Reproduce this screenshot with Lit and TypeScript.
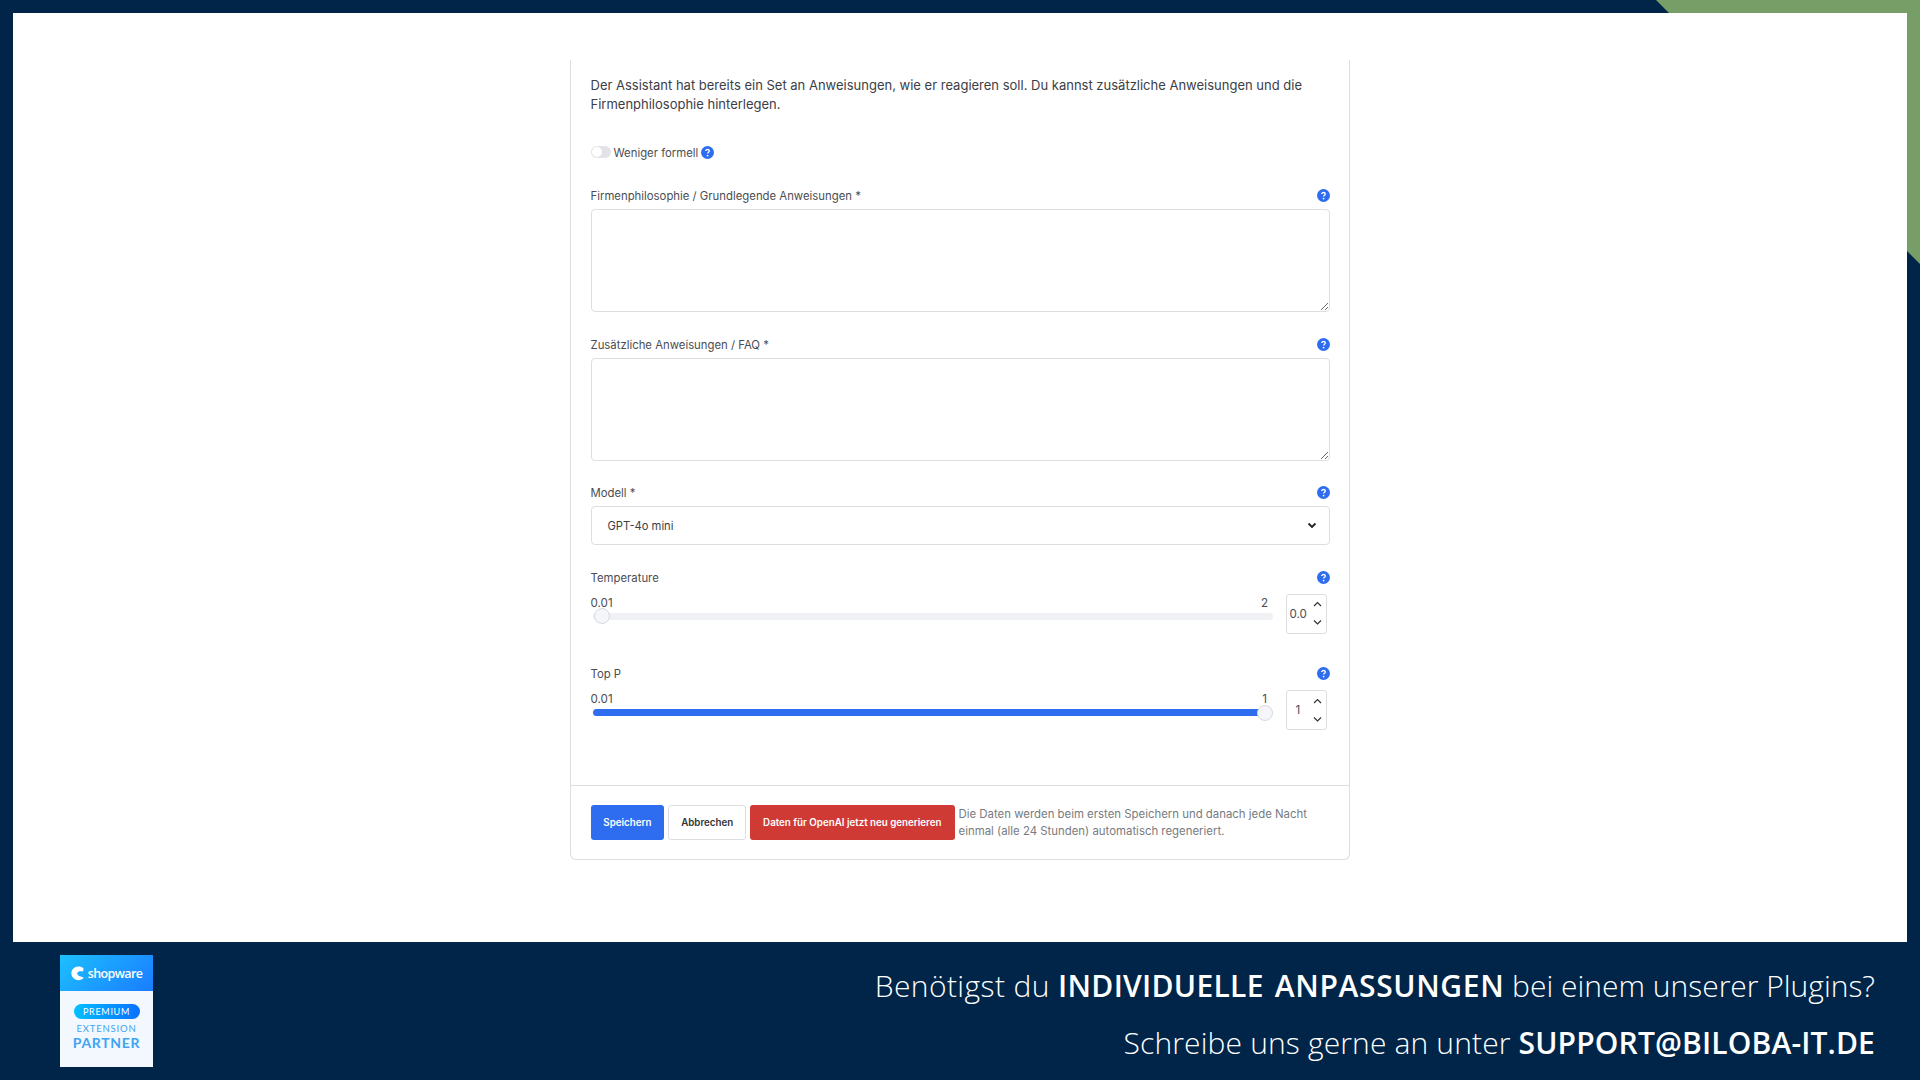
import { LitElement, html, css, svg } from "lit";
import { customElement } from "lit/decorators.js";

const help = html`<svg class="help" viewBox="0 0 13 13" width="13" height="13"><circle cx="6.5" cy="6.5" r="6.5" fill="#2f6df0"/><path d="M4.7 5.1c0-1 .8-1.6 1.8-1.6s1.8.6 1.8 1.5c0 1.3-1.7 1.3-1.7 2.6" fill="none" stroke="#fff" stroke-width="1.3"/><circle cx="6.6" cy="9.6" r=".85" fill="#fff"/></svg>`;
const chev = (up: boolean) => svg`<path d="${up ? "M1 5 4.5 1.5 8 5" : "M1 1.5 4.5 5 8 1.5"}" fill="none" stroke="#333" stroke-width="1.2"/>`;

@customElement("app-root")
export class AppRoot extends LitElement {
  static styles = css`
    :host { display: block; }
    * { box-sizing: border-box; }
    .page { position: relative; width: 1920px; height: 1080px; overflow: hidden; background: #002548; padding: 13px 13px 0; display: flex; flex-direction: column; font-family: Inter, "Liberation Sans", sans-serif; }
    .corner { position: absolute; right: 0; top: 0; }
    .main { position: relative; height: 929px; background: #fff; display: flex; justify-content: center; align-items: flex-start; flex: none; }
    .card { width: 780px; margin-top: 47px; margin-left: -1px; border: 1px solid #dcdee2; border-top: none; border-radius: 0 0 6px 6px; }
    .body { padding: 16px 19px 0 20px; height: 725px; }
    .intro { margin: 0; font-size: 13px; line-height: 19.25px; color: #3c4046; }
    .toggle-row { display: flex; align-items: center; height: 14px; margin-top: 30.5px; font-size: 11.35px; color: #4a4d52; }
    .toggle { width: 20px; height: 12px; border-radius: 6px; background: #e2e3e9; position: relative; margin-right: 3px; }
    .toggle::after { content: ""; position: absolute; left: 1px; top: 1px; width: 10px; height: 10px; border-radius: 50%; background: #fff; }
    .toggle-row .help { margin-left: 3px; }
    .toggle-row span:nth-child(2) { padding-top: 1px; }
    .label { display: flex; justify-content: space-between; align-items: center; height: 16px; margin-bottom: 5px; font-size: 11.35px; color: #4a4d52; }
    .label span { padding-top: 1px; }
    .f1 { margin-top: 28.5px; }
    .f2 { margin-top: 25px; }
    .f3 { margin-top: 24px; }
    .f4 { margin-top: 24.5px; margin-bottom: 0; }
    .f5 { margin-top: 32px; margin-bottom: 0; }
    textarea { display: block; width: 739px; height: 103px; border: 1px solid #dcdee2; border-radius: 4px; background: #fff; margin: 0; padding: 8px; outline: none; }
    .select { width: 739px; height: 39px; border: 1px solid #dcdee2; border-radius: 4px; display: flex; align-items: center; justify-content: space-between; padding: 1px 12px 0 16px; font-size: 11.2px; color: #3c4046; }
    .slider-row { display: flex; align-items: flex-start; }
    .slider { width: 682px; padding-top: 9.5px; }
    .scale { display: flex; justify-content: space-between; font-size: 11.6px; line-height: 16px; color: #4a4d52; padding: 0 3px 0 0; height: 16px; }
    .scale span:last-child { min-width: 10px; text-align: center; }
    .track { position: relative; height: 7px; margin: 2px 0 0 2px; border-radius: 4px; background: #f0f1f5; }
    .fill { position: absolute; left: 0; top: 0; bottom: 0; border-radius: 4px 0 0 4px; background: #2f6df0; }
    .thumb { position: absolute; top: -4.5px; width: 16px; height: 16px; margin-left: -8px; border-radius: 50%; background: #f5f6fa; border: 1px solid #d8dae0; }
    .num { width: 41px; height: 40px; margin: 8.5px 0 0 13px; border: 1px solid #dcdee2; border-radius: 3px; display: flex; align-items: center; justify-content: space-between; padding: 0 4px 0 3px; font-size: 11.6px; color: #4a4d52; }
    .num.single { padding-left: 9px; }
    .spin { display: flex; flex-direction: column; gap: 11px; }
    .spin svg { display: block; }
    .foot { border-top: 1px solid #dcdee2; display: flex; align-items: center; padding: 19px 19px 19px 20px; gap: 4px; }
    .btn { height: 35px; border: 1px solid transparent; border-radius: 3px; font: 600 9.75px Inter, sans-serif; display: flex; align-items: center; justify-content: center; }
    .save { width: 74px; background: #2f6df0; color: #fff; }
    .cancel { width: 78px; background: #fff; border-color: #dcdee2; color: #333; }
    .regen { width: 205px; background: #cf3a35; color: #fff; }
    .note { font-size: 11.4px; line-height: 17px; color: #787b80; width: 372px; }
    .bottom { flex: 1; display: flex; align-items: flex-start; justify-content: space-between; margin: 0 -13px; padding: 13px 45px 0 60px; }
    .badge { width: 93px; height: 112px; background: #f2f8fe; display: flex; flex-direction: column; align-items: center; }
    .badge-top { width: 100%; height: 36px; background: linear-gradient(135deg, #1cc0ff, #1a7cff); display: flex; align-items: center; justify-content: center; gap: 2px; color: #fff; font-size: 12.5px; font-weight: 600; letter-spacing: -0.6px; font-family: "Open Sans", sans-serif; }
    .pill { margin-top: 13px; width: 66px; height: 15px; border-radius: 8px; background: linear-gradient(90deg, #04c0ff, #0a70ff); color: #fff; font-size: 9px; line-height: 15px; text-align: center; letter-spacing: 0.7px; font-family: Lato, sans-serif; }
    .ext { margin-top: 4px; font: 400 9.5px/12px Lato, sans-serif; letter-spacing: 0.8px; color: #3ea4f5; }
    .partner { margin-top: -1px; font: 700 14px/17px Lato, sans-serif; letter-spacing: 0.7px; color: #3ea4f5; }
    .cta { display: flex; flex-direction: column; align-items: flex-end; color: #fff; font-family: "Open Sans", sans-serif; font-size: 30px; font-weight: 300; line-height: 57px; white-space: nowrap; margin-top: 2px; }
    .cta b { font-weight: 600; letter-spacing: 0.15px; }
    .cta b.wide { word-spacing: 3px; letter-spacing: 0.3px; }
    .cta b.wide span { letter-spacing: 0.65px; }
    .lead1 { letter-spacing: 0.4px; }
    .lead2 { letter-spacing: 0.14px; }
  `;

  field(cls: string, label: string) {
    return html`<div class="label ${cls}"><span>${label}</span>${help}</div>`;
  }

  slider(min: string, max: string, val: string, pct: number) {
    return html`<div class="slider-row">
      <div class="slider">
        <div class="scale"><span>${min}</span><span>${max}</span></div>
        <div class="track">
          ${pct > 0 ? html`<div class="fill" style="width:${pct}%"></div>` : ""}
          <div class="thumb" style="left:${pct > 0 ? pct : 1.4}%"></div>
        </div>
      </div>
      <div class="num ${val.length === 1 ? "single" : ""}"><span>${val}</span>
        <div class="spin">
          <svg width="9" height="7" viewBox="0 0 9 7">${chev(true)}</svg>
          <svg width="9" height="7" viewBox="0 0 9 7">${chev(false)}</svg>
        </div>
      </div>
    </div>`;
  }

  render() {
    return html`<div class="page">
      <svg class="corner" width="264" height="264" viewBox="0 0 264 264"><polygon points="0,0 264,0 264,264 251,251 251,13 13,13" fill="#769e66"/></svg>
      <div class="main">
        <div class="card">
          <div class="body">
            <p class="intro">Der Assistant hat bereits ein Set an Anweisungen, wie er reagieren soll. Du kannst zusätzliche Anweisungen und die Firmenphilosophie hinterlegen.</p>
            <div class="toggle-row"><span class="toggle"></span><span>Weniger formell</span>${help}</div>
            ${this.field("f1", "Firmenphilosophie / Grundlegende Anweisungen *")}
            <textarea></textarea>
            ${this.field("f2", "Zusätzliche Anweisungen / FAQ *")}
            <textarea></textarea>
            ${this.field("f3", "Modell *")}
            <div class="select"><span>GPT-4o mini</span>
              <svg width="10" height="7" viewBox="0 0 10 7"><path d="M1.5 1.5 5 5 8.5 1.5" fill="none" stroke="#222" stroke-width="1.8"/></svg>
            </div>
            ${this.field("f4", "Temperature")}
            ${this.slider("0.01", "2", "0.0", 0)}
            ${this.field("f5", "Top P")}
            ${this.slider("0.01", "1", "1", 98.9)}
          </div>
          <div class="foot">
            <div class="btn save">Speichern</div>
            <div class="btn cancel">Abbrechen</div>
            <div class="btn regen">Daten für OpenAI jetzt neu generieren</div>
            <div class="note">Die Daten werden beim ersten Speichern und danach jede Nacht einmal (alle 24 Stunden) automatisch regeneriert.</div>
          </div>
        </div>
      </div>
      <div class="bottom">
        <div class="badge">
          <div class="badge-top">
            <svg width="15" height="15" viewBox="0 0 16 16"><path d="M13.4 2.6C12 1.2 10 .5 7.8.5 3.6.5.4 3.8.4 7.8s3.2 7.3 7.4 7.3c2.4 0 4.5-1 5.8-2.6-1.8-1.4-7-1.8-7-4.6 0-2.4 3.6-2.6 6.4-2.2Z" fill="#fff"/></svg>
            <span>shopware</span>
          </div>
          <div class="pill">PREMIUM</div>
          <div class="ext">EXTENSION</div>
          <div class="partner">PARTNER</div>
        </div>
        <div class="cta">
          <div><span class="lead1">Benötigst du </span><b class="wide">INDIVIDUELLE <span>ANPASSUNGEN</span></b> bei einem unserer Plugins?</div>
          <div><span class="lead2">Schreibe uns gerne an unter </span><b>SUPPORT@BILOBA-IT.DE</b></div>
        </div>
      </div>
    </div>`;
  }
}
